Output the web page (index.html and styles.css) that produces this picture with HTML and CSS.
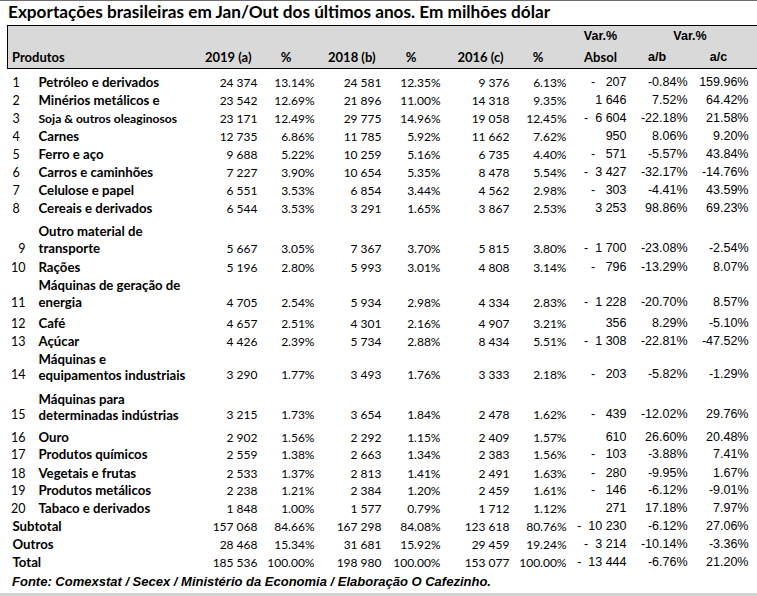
FILE: index.html
```html
<!DOCTYPE html>
<html lang="pt">
<head>
<meta charset="utf-8">
<title>Exportações brasileiras</title>
<link rel="stylesheet" href="styles.css">
</head>
<body>
<div class="page">
  <h1 class="title">Exportações brasileiras em Jan/Out dos últimos anos. Em milhões dólar</h1>
  <table class="tbl">
    <colgroup>
      <col class="c-num"><col class="c-prod"><col class="c-y19"><col class="c-p19"><col class="c-y18"><col class="c-p18"><col class="c-y16"><col class="c-p16"><col class="c-abs"><col class="c-ab"><col class="c-ac">
    </colgroup>
    <thead>
      <tr class="hr1">
        <th class="first"></th><th></th><th></th><th></th><th></th><th></th><th></th><th></th>
        <th class="arial var1">Var.%</th>
        <th class="arial var2" colspan="2">Var.%</th>
      </tr>
      <tr class="hr2">
        <th class="first lbl" colspan="2">Produtos</th>
        <th class="yr">2019 (a)</th><th class="pc">%</th>
        <th class="yr">2018 (b)</th><th class="pc">%</th>
        <th class="yr">2016 (c)</th><th class="pc">%</th>
        <th class="absh">Absol</th>
        <th class="arial pc">a/b</th><th class="arial ach">a/c</th>
      </tr>
    </thead>
    <tbody>
      <tr class="h22"><td class="nl">1</td><td class="pn">Petróleo e derivados</td><td class="n">24 374</td><td class="n">13.14%</td><td class="n">24 581</td><td class="n">12.35%</td><td class="n">9 376</td><td class="n">6.13%</td><td class="a">-&nbsp;&nbsp;&nbsp;207</td><td class="a">-0.84%</td><td class="a last">159.96%</td></tr>
      <tr><td class="nl">2</td><td class="pn">Minérios metálicos e</td><td class="n">23 542</td><td class="n">12.69%</td><td class="n">21 896</td><td class="n">11.00%</td><td class="n">14 318</td><td class="n">9.35%</td><td class="a">1 646</td><td class="a">7.52%</td><td class="a last">64.42%</td></tr>
      <tr><td class="nl">3</td><td class="pn small">Soja &amp; outros oleaginosos</td><td class="n">23 171</td><td class="n">12.49%</td><td class="n">29 775</td><td class="n">14.96%</td><td class="n">19 058</td><td class="n">12.45%</td><td class="a">-&nbsp;&nbsp;6 604</td><td class="a">-22.18%</td><td class="a last">21.58%</td></tr>
      <tr><td class="nl">4</td><td class="pn">Carnes</td><td class="n">12 735</td><td class="n">6.86%</td><td class="n">11 785</td><td class="n">5.92%</td><td class="n">11 662</td><td class="n">7.62%</td><td class="a">950</td><td class="a">8.06%</td><td class="a last">9.20%</td></tr>
      <tr><td class="nl">5</td><td class="pn">Ferro e aço</td><td class="n">9 688</td><td class="n">5.22%</td><td class="n">10 259</td><td class="n">5.16%</td><td class="n">6 735</td><td class="n">4.40%</td><td class="a">-&nbsp;&nbsp;&nbsp;571</td><td class="a">-5.57%</td><td class="a last">43.84%</td></tr>
      <tr><td class="nl">6</td><td class="pn">Carros e caminhões</td><td class="n">7 227</td><td class="n">3.90%</td><td class="n">10 654</td><td class="n">5.35%</td><td class="n">8 478</td><td class="n">5.54%</td><td class="a">-&nbsp;&nbsp;3 427</td><td class="a">-32.17%</td><td class="a last">-14.76%</td></tr>
      <tr><td class="nl">7</td><td class="pn">Celulose e papel</td><td class="n">6 551</td><td class="n">3.53%</td><td class="n">6 854</td><td class="n">3.44%</td><td class="n">4 562</td><td class="n">2.98%</td><td class="a">-&nbsp;&nbsp;&nbsp;303</td><td class="a">-4.41%</td><td class="a last">43.59%</td></tr>
      <tr><td class="nl">8</td><td class="pn">Cereais e derivados</td><td class="n">6 544</td><td class="n">3.53%</td><td class="n">3 291</td><td class="n">1.65%</td><td class="n">3 867</td><td class="n">2.53%</td><td class="a">3 253</td><td class="a">98.86%</td><td class="a last">69.23%</td></tr>
      <tr class="h40"><td class="nr">9</td><td class="pn">Outro material de<br>transporte</td><td class="n">5 667</td><td class="n">3.05%</td><td class="n">7 367</td><td class="n">3.70%</td><td class="n">5 815</td><td class="n">3.80%</td><td class="a">-&nbsp;&nbsp;1 700</td><td class="a">-23.08%</td><td class="a last">-2.54%</td></tr>
      <tr class="h19"><td class="nr">10</td><td class="pn">Rações</td><td class="n">5 196</td><td class="n">2.80%</td><td class="n">5 993</td><td class="n">3.01%</td><td class="n">4 808</td><td class="n">3.14%</td><td class="a">-&nbsp;&nbsp;&nbsp;796</td><td class="a">-13.29%</td><td class="a last">8.07%</td></tr>
      <tr class="h35"><td class="nr">11</td><td class="pn">Máquinas de geração de<br>energia</td><td class="n">4 705</td><td class="n">2.54%</td><td class="n">5 934</td><td class="n">2.98%</td><td class="n">4 334</td><td class="n">2.83%</td><td class="a">-&nbsp;&nbsp;1 228</td><td class="a">-20.70%</td><td class="a last">8.57%</td></tr>
      <tr class="h21"><td class="nr">12</td><td class="pn">Café</td><td class="n">4 657</td><td class="n">2.51%</td><td class="n">4 301</td><td class="n">2.16%</td><td class="n">4 907</td><td class="n">3.21%</td><td class="a">356</td><td class="a">8.29%</td><td class="a last">-5.10%</td></tr>
      <tr><td class="nr">13</td><td class="pn">Açúcar</td><td class="n">4 426</td><td class="n">2.39%</td><td class="n">5 734</td><td class="n">2.88%</td><td class="n">8 434</td><td class="n">5.51%</td><td class="a">-&nbsp;&nbsp;1 308</td><td class="a">-22.81%</td><td class="a last">-47.52%</td></tr>
      <tr class="h33"><td class="nr">14</td><td class="pn tight">Máquinas e<br>equipamentos industriais</td><td class="n">3 290</td><td class="n">1.77%</td><td class="n">3 493</td><td class="n">1.76%</td><td class="n">3 333</td><td class="n">2.18%</td><td class="a">-&nbsp;&nbsp;&nbsp;203</td><td class="a">-5.82%</td><td class="a last">-1.29%</td></tr>
      <tr class="h40"><td class="nr">15</td><td class="pn tight">Máquinas para<br>determinadas indústrias</td><td class="n">3 215</td><td class="n">1.73%</td><td class="n">3 654</td><td class="n">1.84%</td><td class="n">2 478</td><td class="n">1.62%</td><td class="a">-&nbsp;&nbsp;&nbsp;439</td><td class="a">-12.02%</td><td class="a last">29.76%</td></tr>
      <tr class="h23"><td class="nr">16</td><td class="pn">Ouro</td><td class="n">2 902</td><td class="n">1.56%</td><td class="n">2 292</td><td class="n">1.15%</td><td class="n">2 409</td><td class="n">1.57%</td><td class="a">610</td><td class="a">26.60%</td><td class="a last">20.48%</td></tr>
      <tr class="h17"><td class="nr">17</td><td class="pn">Produtos químicos</td><td class="n">2 559</td><td class="n">1.38%</td><td class="n">2 663</td><td class="n">1.34%</td><td class="n">2 383</td><td class="n">1.56%</td><td class="a">-&nbsp;&nbsp;&nbsp;103</td><td class="a">-3.88%</td><td class="a last">7.41%</td></tr>
      <tr class="h19"><td class="nr">18</td><td class="pn">Vegetais e frutas</td><td class="n">2 533</td><td class="n">1.37%</td><td class="n">2 813</td><td class="n">1.41%</td><td class="n">2 491</td><td class="n">1.63%</td><td class="a">-&nbsp;&nbsp;&nbsp;280</td><td class="a">-9.95%</td><td class="a last">1.67%</td></tr>
      <tr class="h17"><td class="nr">19</td><td class="pn">Produtos metálicos</td><td class="n">2 238</td><td class="n">1.21%</td><td class="n">2 384</td><td class="n">1.20%</td><td class="n">2 459</td><td class="n">1.61%</td><td class="a">-&nbsp;&nbsp;&nbsp;146</td><td class="a">-6.12%</td><td class="a last">-9.01%</td></tr>
      <tr><td class="nr">20</td><td class="pn">Tabaco e derivados</td><td class="n">1 848</td><td class="n">1.00%</td><td class="n">1 577</td><td class="n">0.79%</td><td class="n">1 712</td><td class="n">1.12%</td><td class="a">271</td><td class="a">17.18%</td><td class="a last">7.97%</td></tr>
      <tr><td class="tl" colspan="2">Subtotal</td><td class="n">157 068</td><td class="n">84.66%</td><td class="n">167 298</td><td class="n">84.08%</td><td class="n">123 618</td><td class="n">80.76%</td><td class="a">-&nbsp;&nbsp;10 230</td><td class="a">-6.12%</td><td class="a last">27.06%</td></tr>
      <tr><td class="tl" colspan="2">Outros</td><td class="n">28 468</td><td class="n">15.34%</td><td class="n">31 681</td><td class="n">15.92%</td><td class="n">29 459</td><td class="n">19.24%</td><td class="a">-&nbsp;&nbsp;3 214</td><td class="a">-10.14%</td><td class="a last">-3.36%</td></tr>
      <tr><td class="tl" colspan="2">Total</td><td class="n">185 536</td><td class="n">100.00%</td><td class="n">198 980</td><td class="n">100.00%</td><td class="n">153 077</td><td class="n">100.00%</td><td class="a">-&nbsp;&nbsp;13 444</td><td class="a">-6.76%</td><td class="a last">21.20%</td></tr>
    </tbody>
  </table>
  <p class="source">Fonte: Comexstat / Secex / Ministério da Economia / Elaboração O Cafezinho.</p>
  <div class="bar"></div>
</div>
</body>
</html>
```

FILE: styles.css
```css
html, body {
  margin: 0;
  padding: 0;
  background: #ffffff;
}

body {
  width: 757px;
  height: 596px;
  overflow: hidden;
  font-family: Lato, "Liberation Sans", sans-serif;
  color: #000000;
}

.page {
  height: 595px;
  border-top: 1px solid #6f6f6f;
  display: flex;
  flex-direction: column;
}

.title {
  margin: 0;
  padding-left: 8px;
  height: 25px;
  line-height: 22px;
  font-size: 17.2px;
  font-weight: 700;
  white-space: nowrap;
}

.tbl {
  margin-left: 7px;
  width: 751px;
  table-layout: fixed;
  border-collapse: collapse;
  border-spacing: 0;
  font-size: 12px;
}

.c-num { width: 28px; }
.c-prod { width: 165px; }
.c-y19 { width: 57px; }
.c-p19 { width: 57px; }
.c-y18 { width: 67px; }
.c-p18 { width: 59px; }
.c-y16 { width: 69px; }
.c-p16 { width: 57px; }
.c-abs { width: 60px; }
.c-ab { width: 61px; }
.c-ac { width: 71px; }

th, td {
  padding: 0;
  white-space: nowrap;
}

thead th {
  background: #d9d9d9;
  font-weight: 700;
  font-size: 13px;
  text-align: center;
}

.hr1 th {
  height: 20px;
  border-top: 1px solid #000;
  line-height: 20px;
  vertical-align: middle;
}

.hr2 th {
  height: 22px;
  border-bottom: 1px solid #000;
  line-height: 20px;
  vertical-align: middle;
}

thead th.first {
  border-left: 1px solid #000;
}

.arial {
  font-family: "Liberation Sans", Arial, sans-serif;
  font-size: 12.5px;
}

.lbl {
  text-align: left;
  padding-left: 4px;
}

.yr {
  text-align: right;
  padding-right: 6px;
}

.pc {
  text-align: center;
}

.var1, .absh {
  padding-left: 8px;
}

.var2 {
  padding-left: 4px;
  padding-right: 9px;
}

.ach {
  padding-right: 9px;
}

tbody td {
  height: 18px;
  line-height: 17px;
  vertical-align: bottom;
}

tbody tr.h22 td { height: 22px; }
tbody tr.h40 td { height: 40px; }
tbody tr.h19 td { height: 19px; }
tbody tr.h35 td { height: 35px; }
tbody tr.h21 td { height: 21px; }
tbody tr.h33 td { height: 33px; }
tbody tr.h23 td { height: 23px; }
tbody tr.h17 td { height: 17px; }

.nl {
  text-align: left;
  padding-left: 5px;
  font-size: 12.5px;
}

.nr {
  text-align: right;
  padding-right: 10px;
  font-size: 12.5px;
}

.pn {
  font-weight: 700;
  font-size: 13.2px;
  padding-left: 3px;
}

.pn.small {
  font-size: 12.1px;
}

.pn.tight {
  line-height: 16px;
}

.tl {
  font-weight: 700;
  font-size: 13.2px;
  padding-left: 5px;
}

.n {
  text-align: right;
}

.a {
  text-align: right;
  font-family: "Liberation Sans", Arial, sans-serif;
  font-size: 12.5px;
}

.a.last {
  padding-right: 10px;
}

.source {
  margin: 0;
  padding: 2px 0 0 12px;
  height: 20px;
  line-height: 18px;
  font-family: "Liberation Sans", Arial, sans-serif;
  font-size: 13px;
  font-weight: 700;
  font-style: italic;
  white-space: nowrap;
}

.bar {
  margin-top: auto;
  height: 3px;
  background: #d3d3d3;
}
```
